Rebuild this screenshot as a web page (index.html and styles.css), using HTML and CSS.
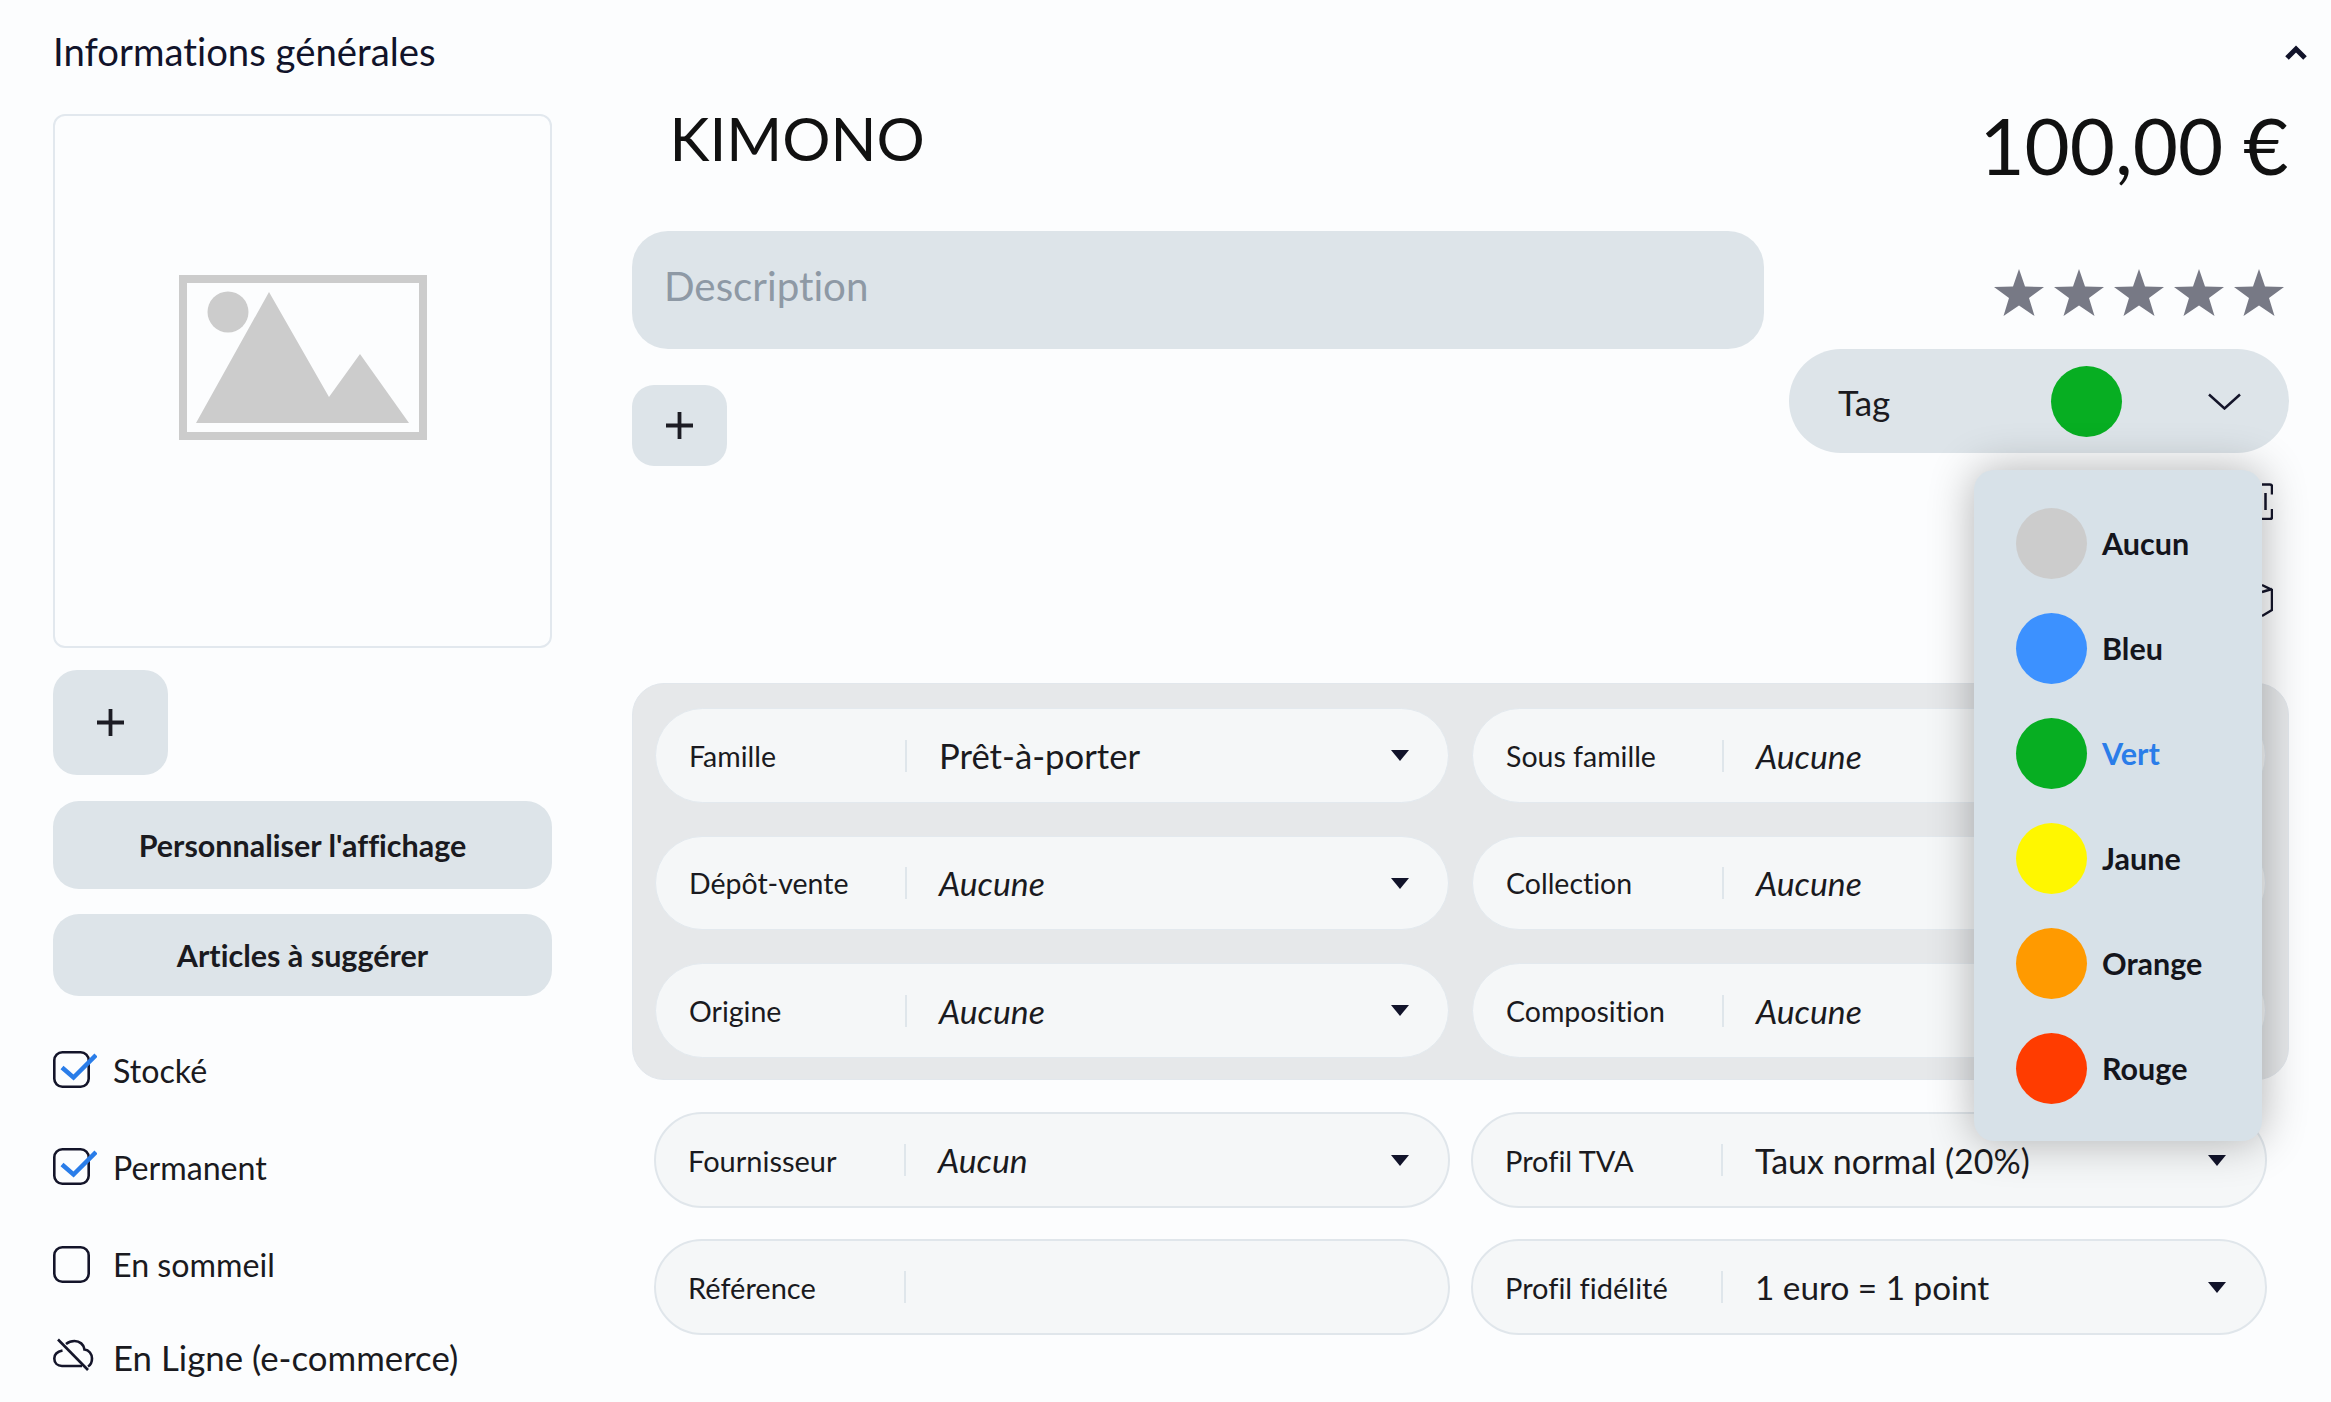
FILE: index.html
```html
<!DOCTYPE html>
<html lang="fr">
<head>
<meta charset="utf-8">
<title>Informations générales</title>
<link rel="stylesheet" href="styles.css">
</head>
<body>
<div class="page">
  <header class="head">
    <h1 class="title">Informations générales</h1>
    <svg class="collapse" viewBox="0 0 22 16"><path d="M2 14 11 5l9 9" fill="none" stroke="#11132a" stroke-width="5"/></svg>
  </header>
  <div class="content">
    <aside class="left">
      <div class="photo">
        <svg class="photo-icon" viewBox="0 0 248 165">
          <rect x="4" y="4" width="240" height="157" fill="none" stroke="#ccc" stroke-width="8"/>
          <circle cx="49" cy="37" r="20.5" fill="#ccc"/>
          <path d="M17 148 90 17l60 105 31-43 49 69z" fill="#ccc"/>
        </svg>
      </div>
      <button class="plus plus-lg"><svg viewBox="0 0 27 27"><path d="M13.5 0v27M0 13.5h27" stroke="#1c1c24" stroke-width="3.8"/></svg></button>
      <button class="wide wide-a">Personnaliser l'affichage</button>
      <button class="wide wide-b">Articles à suggérer</button>
      <ul class="checks">
        <li class="check"><svg class="cb" viewBox="0 0 44 38"><rect x="1.3" y="1.3" width="34.4" height="34.4" rx="8" fill="none" stroke="#14152a" stroke-width="2.6"/><path d="M9 16.5 20.5 26.5 43 4" fill="none" stroke="#2a7de9" stroke-width="4.5"/></svg><span>Stocké</span></li>
        <li class="check"><svg class="cb" viewBox="0 0 44 38"><rect x="1.3" y="1.3" width="34.4" height="34.4" rx="8" fill="none" stroke="#14152a" stroke-width="2.6"/><path d="M9 16.5 20.5 26.5 43 4" fill="none" stroke="#2a7de9" stroke-width="4.5"/></svg><span>Permanent</span></li>
        <li class="check"><svg class="cb" viewBox="0 0 44 38"><rect x="1.3" y="1.3" width="34.4" height="34.4" rx="8" fill="none" stroke="#14152a" stroke-width="2.6"/></svg><span>En sommeil</span></li>
        <li class="check check-online"><svg class="cb" viewBox="0 0 44 38"><g fill="none" stroke="#14152a" stroke-width="2.6"><path d="M9.5 12.5C4.5 13.5 1.300 16.500 1.300 20.500 1.300 25 4.500 28 9 28H29"/><path d="M13 6C15.500 4 18.500 3 21.500 3 26.500 3 31 6.500 31.500 11.500 36 12 39 16 39 20.500 39 24 37.500 27 35 28.500"/><path d="M5 1.500 35 32"/></g></svg><span>En Ligne (e-commerce)</span></li>
      </ul>
    </aside>
    <main class="right">
      <section class="top">
        <div class="top-main">
          <div class="name">KIMONO</div>
          <div class="desc">Description</div>
          <button class="plus plus-sm"><svg viewBox="0 0 27 27"><path d="M13.5 0v27M0 13.5h27" stroke="#1c1c24" stroke-width="3.8"/></svg></button>
        </div>
        <div class="top-side">
          <div class="price">100,00 €</div>
          <div class="stars">
            <svg viewBox="0 0 50 47"><path class="star" d="M25 0l6 17.500 19 .5-15 11 5.500 18L25 36.500 9.500 47 15 29 0 18l19-.5z"/></svg>
            <svg viewBox="0 0 50 47"><path class="star" d="M25 0l6 17.500 19 .5-15 11 5.500 18L25 36.500 9.500 47 15 29 0 18l19-.5z"/></svg>
            <svg viewBox="0 0 50 47"><path class="star" d="M25 0l6 17.500 19 .5-15 11 5.500 18L25 36.500 9.500 47 15 29 0 18l19-.5z"/></svg>
            <svg viewBox="0 0 50 47"><path class="star" d="M25 0l6 17.500 19 .5-15 11 5.500 18L25 36.500 9.500 47 15 29 0 18l19-.5z"/></svg>
            <svg viewBox="0 0 50 47"><path class="star" d="M25 0l6 17.500 19 .5-15 11 5.500 18L25 36.500 9.500 47 15 29 0 18l19-.5z"/></svg>
          </div>
          <div class="tag">
            <span class="tag-label">Tag</span>
            <span class="dot dot-green"></span>
            <svg class="tag-chev" viewBox="0 0 33 17"><path d="M1 1.500 16.500 15.500 32 1.500" fill="none" stroke="#14152a" stroke-width="2.500"/></svg>
          </div>
          <div class="tools">
            <svg viewBox="0 0 37 37"><g fill="none" stroke="#14152a" stroke-width="2.500"><path d="M26 1.500h8a2 2 0 0 1 2 2v8M36 26v8a2 2 0 0 1-2 2h-8M29.500 10v17"/></g></svg>
            <svg viewBox="0 0 37 37"><g fill="none" stroke="#14152a" stroke-width="2.500"><path d="M26 2l10 5v20l-10 6M26 9l10-3"/></g></svg>
          </div>
          <ul class="menu">
            <li class="opt"><span class="dot dot-grey"></span><span class="opt-text">Aucun</span></li>
            <li class="opt"><span class="dot dot-blue"></span><span class="opt-text">Bleu</span></li>
            <li class="opt opt-active"><span class="dot dot-green"></span><span class="opt-text">Vert</span></li>
            <li class="opt"><span class="dot dot-yellow"></span><span class="opt-text">Jaune</span></li>
            <li class="opt"><span class="dot dot-orange"></span><span class="opt-text">Orange</span></li>
            <li class="opt"><span class="dot dot-red"></span><span class="opt-text">Rouge</span></li>
          </ul>
        </div>
      </section>
      <section class="panel">
        <div class="field"><span class="flabel">Famille</span><i class="sep"></i><span class="val val-lg">Prêt-à-porter</span><b class="arrow"></b></div>
        <div class="field"><span class="flabel">Sous famille</span><i class="sep"></i><span class="val val-none">Aucune</span><b class="arrow"></b></div>
        <div class="field"><span class="flabel">Dépôt-vente</span><i class="sep"></i><span class="val val-none">Aucune</span><b class="arrow"></b></div>
        <div class="field"><span class="flabel">Collection</span><i class="sep"></i><span class="val val-none">Aucune</span><b class="arrow"></b></div>
        <div class="field"><span class="flabel">Origine</span><i class="sep"></i><span class="val val-none">Aucune</span><b class="arrow"></b></div>
        <div class="field"><span class="flabel">Composition</span><i class="sep"></i><span class="val val-none">Aucune</span><b class="arrow"></b></div>
      </section>
      <section class="lower">
        <div class="field field-b"><span class="flabel">Fournisseur</span><i class="sep"></i><span class="val val-none">Aucun</span><b class="arrow"></b></div>
        <div class="field field-b"><span class="flabel">Profil TVA</span><i class="sep"></i><span class="val">Taux normal (20%)</span><b class="arrow"></b></div>
        <div class="field field-b"><span class="flabel">Référence</span><i class="sep"></i><span class="val"></span></div>
        <div class="field field-b"><span class="flabel">Profil fidélité</span><i class="sep"></i><span class="val val-sm">1 euro = 1 point</span><b class="arrow"></b></div>
      </section>
    </main>
  </div>
</div>
</body>
</html>
```

FILE: styles.css
```css
* { box-sizing: border-box; }
html, body { margin: 0; height: 100%; }
body {
  background: #fcfdfe;
  color: #1a1a20;
  font-family: Lato, "Liberation Sans", sans-serif;
  font-variant-ligatures: none;
  overflow: hidden;
}
.page { width: 2331px; height: 1402px; }
.head {
  height: 114px;
  display: flex;
  justify-content: space-between;
  padding: 26px 24px 0 53px;
}
.title { margin: 0; font-size: 38.300px; font-weight: 400; line-height: 50px; color: #11132a; }
.collapse { width: 22px; height: 16px; margin-top: 18px; }
.content { display: flex; gap: 80px; padding-left: 53px; }
.left { width: 499px; display: flex; flex-direction: column; }
.photo {
  height: 534px;
  border: 2px solid #e2e8ee;
  border-radius: 12px;
  display: flex;
  align-items: center;
  justify-content: center;
  padding-bottom: 48px;
}
.photo-icon { width: 248px; height: 165px; }
button { border: 0; font-family: inherit; color: inherit; padding: 0; font-variant-ligatures: none; }
.plus { background: #dde4e9; display: flex; align-items: center; justify-content: center; }
.plus svg { width: 27px; height: 27px; }
.plus-lg { width: 115px; height: 105px; border-radius: 24px; margin-top: 22px; }
.wide {
  background: #dde4e9;
  border-radius: 26px;
  font-size: 30.500px;
  font-weight: 700;
  margin-top: 25px;
  color: #1a1a20;
}
.wide-a { height: 88px; margin-top: 25.500px; }
.wide-b { height: 82px; }
.checks { list-style: none; margin: 26px 0 0; padding: 0; }
.check { height: 97.300px; display: flex; align-items: center; gap: 16px; font-size: 32.200px; }
.check-online { margin-top: -5px; font-size: 34.800px; }
.cb { width: 44px; height: 38px; flex: none; }
.right { width: 1657px; }
.top { height: 569px; display: flex; gap: 25px; }
.top-main { width: 1132px; }
.name { font-size: 60.300px; line-height: 60px; padding-left: 37.500px; color: #111; margin-top: -6px; }
.desc {
  height: 118px;
  margin-top: 62.500px;
  background: #dde4e9;
  border-radius: 36px;
  padding: 0 0 9px 32px;
  display: flex;
  align-items: center;
  font-size: 40.300px;
  color: #8e99a5;
}
.plus-sm { width: 95px; height: 81px; border-radius: 22px; margin-top: 36.500px; }
.top-side { width: 500px; position: relative; }
.price { font-size: 78px; line-height: 78px; text-align: right; padding-right: .5px; color: #111; margin-top: -8px; height: 78px; }
.stars { display: flex; justify-content: flex-end; gap: 10px; padding-right: 5.500px; margin-top: 85px; }
.stars svg { width: 50px; height: 47px; }
.star { fill: #777985; }
.tag {
  height: 104px;
  margin-top: 33px;
  background: #dde4e9;
  border-radius: 52px;
  display: flex;
  align-items: center;
  padding-left: 49px;
  font-size: 35px;
}
.tag-label { width: 213px; padding-top: 1px; }
.tag-chev { width: 33px; height: 17px; margin-left: 86px; }
.dot { display: block; width: 71px; height: 71px; border-radius: 50%; flex: none; }
.dot-grey { background: #ccc; }
.dot-blue { background: #3c91ff; }
.dot-green { background: #07ae22; }
.dot-yellow { background: #fff700; }
.dot-orange { background: #ff9a00; }
.dot-red { background: #ff3c00; }
.tools { display: flex; flex-direction: column; align-items: flex-end; padding-right: 16px; margin-top: 30px; gap: 63px; }
.tools svg { width: 37px; height: 37px; }
.menu {
  position: absolute;
  left: 185px;
  top: 356px;
  width: 288px;
  height: 671px;
  margin: 0;
  padding: 38px 0 0 42px;
  list-style: none;
  background: #d7e1e8;
  border-radius: 20px;
  box-shadow: 0 0 45px rgba(0, 0, 0, .3);
  display: flex;
  flex-direction: column;
  gap: 34px;
  z-index: 2;
}
.opt { display: flex; align-items: center; gap: 15px; font-size: 30.500px; font-weight: 700; color: #14151c; }
.opt-text { margin-top: -2px; }
.opt-active { color: #2a7de9; }
.panel {
  height: 397px;
  background: #e6e8ea;
  border: 1px solid #e2e7ec;
  border-radius: 32px;
  padding: 24px 22px;
  display: grid;
  grid-template-columns: 793.500px 793.500px;
  grid-auto-rows: 94.500px;
  column-gap: 23.500px;
  row-gap: 33px;
}
.field {
  display: flex;
  align-items: center;
  background: #f5f7f8;
  border: 1px solid #e3e9ee;
  border-radius: 48px;
  padding: 1px 33px 0;
}
.field-b { border-width: 2px; border-color: #e0e6eb; padding: 0 32px; }
.flabel { width: 216px; font-size: 28.500px; flex: none; color: #1a1a20; }
.field-b .flabel { font-size: 29px; }
.sep { width: 2px; height: 32px; background: #dfe6eb; flex: none; }
.val { flex: 1; margin-left: 32px; font-size: 34px; color: #1a1a20; }
.val-lg { font-size: 34.700px; }
.val-sm { font-size: 33.300px; }
.val-none { font-style: italic; font-size: 33.700px; }
.arrow {
  width: 0;
  height: 0;
  border-left: 9.500px solid transparent;
  border-right: 9.500px solid transparent;
  border-top: 11px solid #11132a;
  margin-right: 5.500px;
}
.field-b .arrow { margin-right: 7px; }
.lower {
  margin-top: 32px;
  padding-left: 22px;
  width: 1636px;
  display: grid;
  grid-template-columns: 796px 796px;
  grid-auto-rows: 96px;
  column-gap: 21px;
  row-gap: 31px;
}
```
